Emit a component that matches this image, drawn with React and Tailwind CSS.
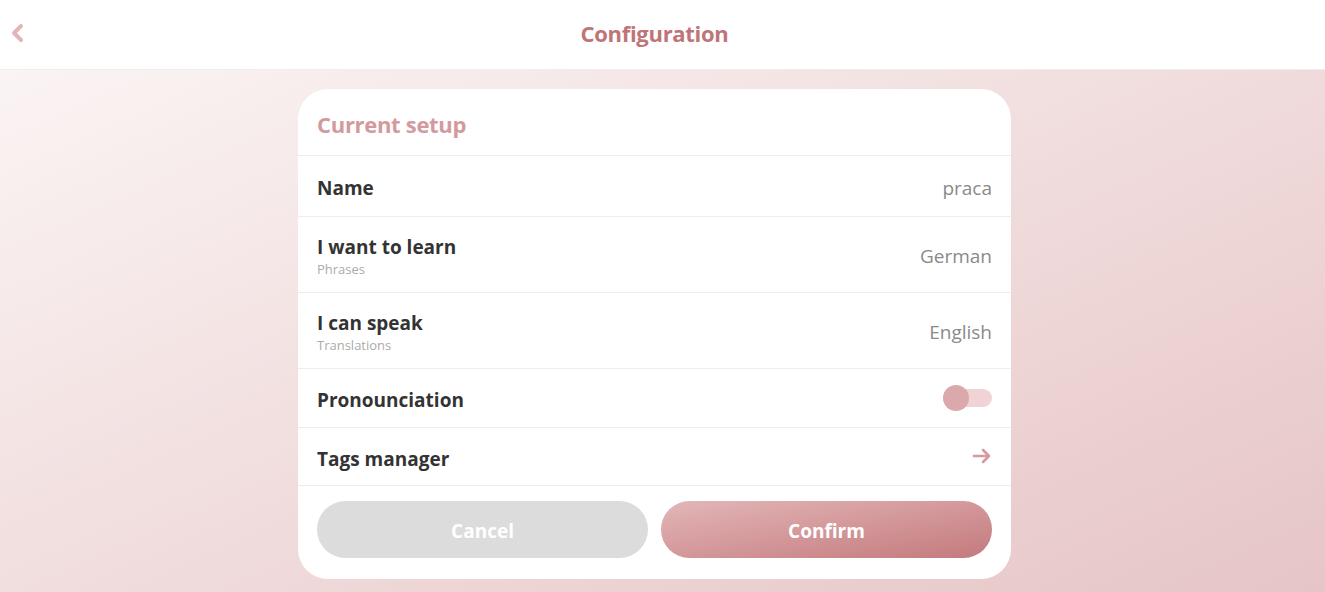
import { useState } from "react";

function Row({ label, sub, children, className = "" }) {
  return (
    <div
      className={`flex items-center justify-between border-t border-[#ededed] px-[19px] ${sub ? "pt-[2px]" : "pt-[4px]"} ${className}`}
    >
      <div className="flex flex-col">
        <span className="text-[19px] font-bold leading-[24px] text-[#333]">{label}</span>
        {sub && <span className="mt-[2px] text-[13px] leading-[16px] text-[#ababab]">{sub}</span>}
      </div>
      {children}
    </div>
  );
}

export default function App() {
  const [pron, setPron] = useState(false);

  return (
    <div
      className="flex h-[592px] w-full flex-col overflow-hidden bg-gradient-to-br from-[#fcf7f7] to-[#e6c5c6]"
      style={{ fontFamily: '"Open Sans", "Noto Sans", sans-serif' }}
    >
      <header className="relative flex h-[70px] shrink-0 items-center justify-center border-b border-[#eee] bg-white pb-[2px] pr-[16px]">
        <button className="absolute left-[8px] top-[22px] text-[#e2b5b9]">
          <svg width="18" height="22" viewBox="0 0 18 22" fill="none">
            <path d="M13 4 L6 11 L13 18" stroke="currentColor" strokeWidth="4" strokeLinecap="round" strokeLinejoin="round" />
          </svg>
        </button>
        <h1 className="text-[22px] font-bold tracking-[-0.3px] text-[#c07478]">Configuration</h1>
      </header>

      <div className="flex flex-1 justify-center pr-[16px] pt-[19px]">
        <div className="flex h-[490px] w-[713px] flex-col overflow-hidden rounded-[30px] bg-white">
          <div className="flex h-[66px] items-center px-[19px] pt-[4px]">
            <h2 className="text-[22px] font-bold tracking-[-0.3px] text-[#d39a9e]">Current setup</h2>
          </div>

          <Row label="Name" className="h-[61px]">
            <span className="text-[19px] text-[#8a8a8a]">praca</span>
          </Row>
          <Row label="I want to learn" sub="Phrases" className="h-[76px]">
            <span className="pt-[2px] text-[19px] text-[#8a8a8a]">German</span>
          </Row>
          <Row label="I can speak" sub="Translations" className="h-[76px]">
            <span className="pt-[2px] text-[19px] text-[#8a8a8a]">English</span>
          </Row>
          <Row label="Pronounciation" className="h-[59px]">
            <button
              onClick={() => setPron(!pron)}
              className="relative -mt-[4px] h-[18px] w-[49px] rounded-full bg-[#efd3d5]"
            >
              <span
                className={`absolute top-[-4px] h-[26px] w-[26px] rounded-full bg-[#dba9ac] ${pron ? "left-[23px]" : "left-0"}`}
              />
            </button>
          </Row>
          <Row label="Tags manager" className="h-[58px]">
            <svg width="20" height="18" viewBox="0 0 20 18" fill="none" className="-mt-[6px] text-[#d6999d]">
              <path d="M2 9 H17 M11 3 L17 9 L11 15" stroke="currentColor" strokeWidth="2.6" strokeLinecap="round" strokeLinejoin="round" />
            </svg>
          </Row>

          <div className="flex gap-[13px] border-t border-[#ededed] px-[19px] pt-[15px]">
            <button className="h-[57px] flex-1 rounded-full bg-[#dcdcdc] pt-[3px] text-[19px] font-bold text-white">
              Cancel
            </button>
            <button className="h-[57px] flex-1 rounded-full bg-gradient-to-br from-[#e3b6b8] to-[#c37a7d] pt-[3px] text-[19px] font-bold text-white">
              Confirm
            </button>
          </div>
        </div>
      </div>
    </div>
  );
}
